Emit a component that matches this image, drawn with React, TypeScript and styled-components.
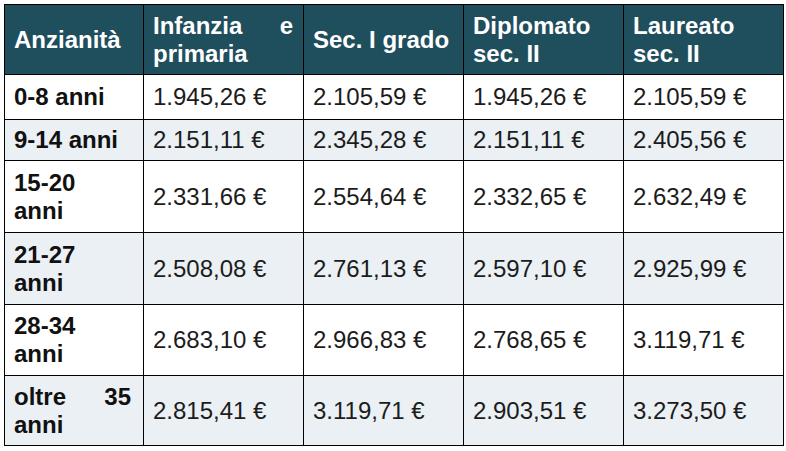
import styled, { createGlobalStyle } from 'styled-components';

const GlobalStyle = createGlobalStyle`
  body {
    margin: 0;
    background: #ffffff;
    font-family: 'Liberation Sans', Arial, sans-serif;
  }
`;

const Page = styled.main`
  padding: 4px 0 0 4px;
`;

const Table = styled.table`
  width: 779px;
  table-layout: fixed;
  border-collapse: collapse;
  border: 1px solid #000;
  font-size: 24px;
  line-height: 28px;
`;

const Col = styled.col<{ $w: number }>`
  width: ${(p) => p.$w}px;
`;

const HeadRow = styled.tr`
  height: 70px;
  background: #1f4e5c;
`;

const Row = styled.tr<{ $h: number; $alt: boolean }>`
  height: ${(p) => p.$h}px;
  background: ${(p) => (p.$alt ? '#eaf0f3' : '#ffffff')};
`;

const Th = styled.th`
  color: #ffffff;
  font-weight: 700;
  text-align: justify;
  vertical-align: middle;
  padding: 0 10px 0 9px;
  border: 1px solid #000;
`;

const Label = styled.td`
  color: #111;
  font-weight: 700;
  text-align: justify;
  vertical-align: middle;
  padding: 0 12px 0 9px;
  border: 1px solid #000;
`;

const Cell = styled.td`
  color: #1c1c1c;
  text-align: justify;
  vertical-align: middle;
  padding: 0 10px 0 9px;
  border: 1px solid #000;
`;

const widths = [139, 160, 160, 160, 160];

const headers = ['Anzianità', 'Infanzia e primaria', 'Sec. I grado', 'Diplomato sec. II', 'Laureato sec. II'];

const rows = [
  { label: '0-8 anni', h: 45, values: ['1.945,26 €', '2.105,59 €', '1.945,26 €', '2.105,59 €'] },
  { label: '9-14 anni', h: 41, values: ['2.151,11 €', '2.345,28 €', '2.151,11 €', '2.405,56 €'] },
  { label: '15-20 anni', h: 72, values: ['2.331,66 €', '2.554,64 €', '2.332,65 €', '2.632,49 €'] },
  { label: '21-27 anni', h: 72, values: ['2.508,08 €', '2.761,13 €', '2.597,10 €', '2.925,99 €'] },
  { label: '28-34 anni', h: 71, values: ['2.683,10 €', '2.966,83 €', '2.768,65 €', '3.119,71 €'] },
  { label: 'oltre 35 anni', h: 70, values: ['2.815,41 €', '3.119,71 €', '2.903,51 €', '3.273,50 €'] },
];

const App = () => {
  return (
    <>
      <GlobalStyle />
      <Page>
        <Table>
          <colgroup>
            {widths.map((w, i) => (
              <Col key={i} $w={w} />
            ))}
          </colgroup>
          <thead>
            <HeadRow>
              {headers.map((h) => (
                <Th key={h}>{h}</Th>
              ))}
            </HeadRow>
          </thead>
          <tbody>
            {rows.map((r, i) => (
              <Row key={r.label} $h={r.h} $alt={i % 2 === 1}>
                <Label>{r.label}</Label>
                {r.values.map((v, j) => (
                  <Cell key={j}>{v}</Cell>
                ))}
              </Row>
            ))}
          </tbody>
        </Table>
      </Page>
    </>
  );
};

export default App;
